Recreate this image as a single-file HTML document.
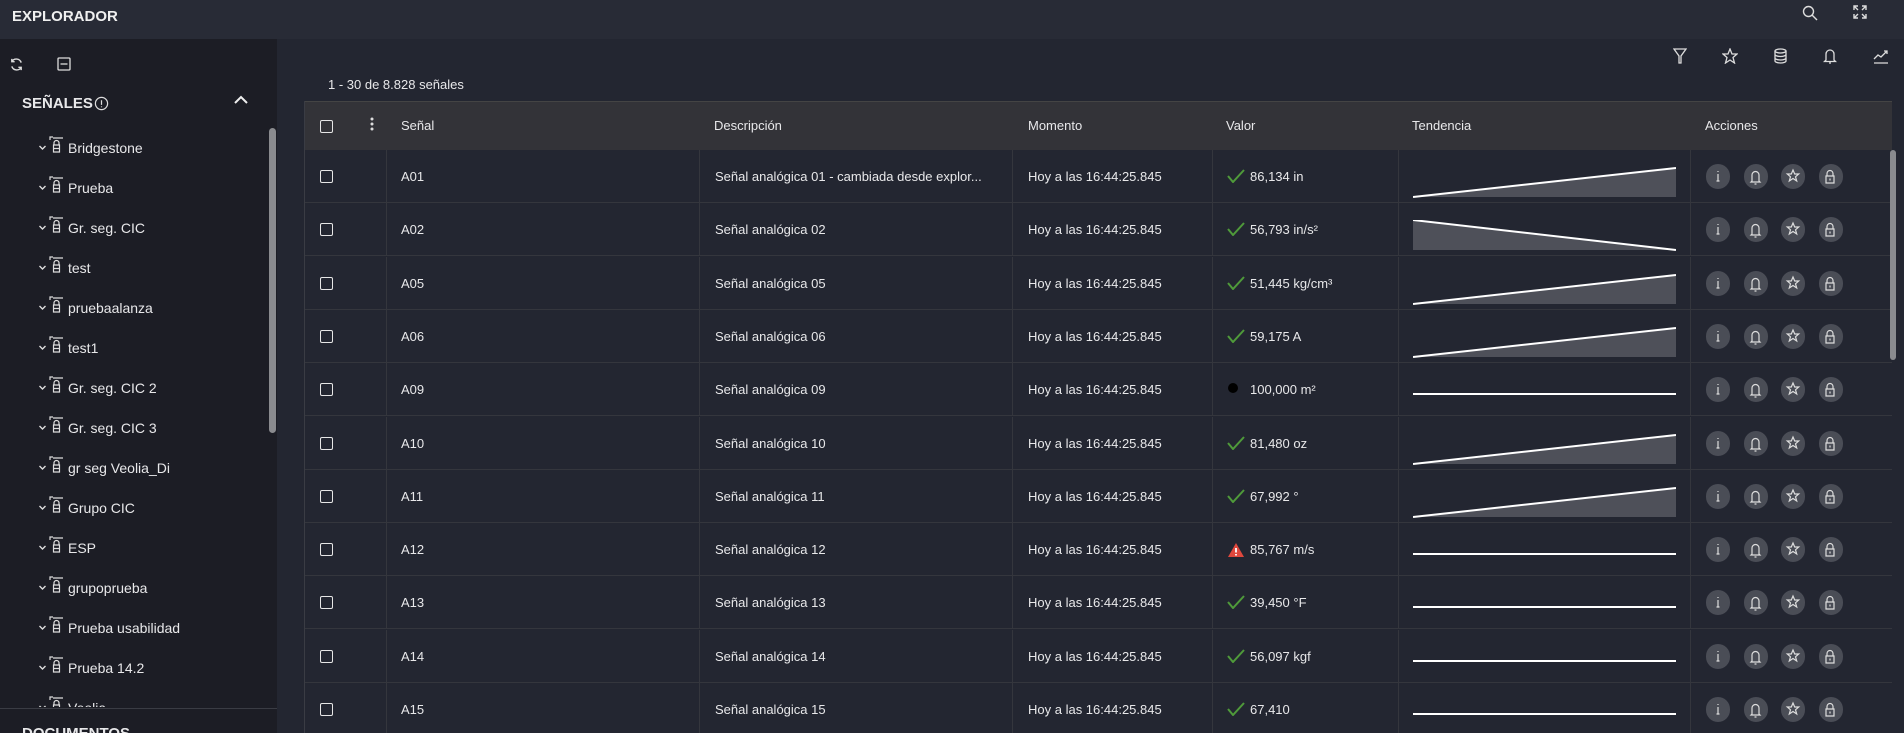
<!DOCTYPE html>
<html style="width:1904px;height:733px;overflow:hidden"><head><meta charset="utf-8"><style>
*{margin:0;padding:0;box-sizing:border-box}
body{width:1904px;height:733px;overflow:hidden;background:#232631;font-family:"Liberation Sans",sans-serif;color:#e8e8ea;font-size:13px;position:relative}
#wrap{position:absolute;left:0;top:0;width:1904px;height:733px;overflow:hidden}
.a{position:absolute}
#hdr{left:0;top:0;width:1904px;height:39px;background:#282b36}
#side{left:0;top:39px;width:277px;height:694px;background:#1c1d25}
.ti{position:absolute;left:38px;font-size:14px;height:20px;line-height:20px}
.ti .ch{position:absolute;left:0;top:5px}
.ti .ic{position:absolute;left:11px;top:-2px}
.ti span{position:absolute;left:30px;white-space:nowrap}
.row{position:absolute;left:304px;width:1588px;height:53px;border-bottom:1px solid #34363d}
.row div{position:absolute;top:0;height:53px;line-height:53px;white-space:nowrap}
.cb{width:13px;height:13px;border:1.5px solid #e6e6e6;border-radius:2px;position:absolute}
.vl{position:absolute;top:0;width:1px;height:100%;background:#34363d}
.act{position:absolute;top:14px;width:24px;height:25px;border-radius:12px;background:#4a4d56}
</style></head><body><div id="wrap">
<div id="hdr" class="a"><div class="a" style="left:12px;top:8px;font-size:15px;font-weight:bold;color:#f0f0f0">EXPLORADOR</div>
<svg class="a" style="left:1802px;top:5px" width="16" height="16" viewBox="0 0 16 16" fill="none" stroke="#ddd" stroke-width="1.4"><circle cx="6.5" cy="6.5" r="5"/><path d="M10 10l5 5"/></svg>
<svg class="a" style="left:1853px;top:5px" width="14" height="14" viewBox="0 0 14 14" fill="none" stroke="#ddd" stroke-width="1.4"><path d="M1 5V1h4M9 1h4v4M13 9v4H9M5 13H1V9M1 1l4 4M13 1L9 5M13 13L9 9M1 13l4-4"/></svg>
</div>
<div id="side" class="a">
<svg class="a" style="left:9px;top:18px" width="15" height="15" viewBox="0 0 16 16" fill="none" stroke="#ddd" stroke-width="1.5"><path d="M13 6A5.5 5.5 0 0 0 3 5M3 10a5.5 5.5 0 0 0 10 1M3 2v3h3M13 14v-3h-3"/></svg>
<svg class="a" style="left:57px;top:18px" width="14" height="14" viewBox="0 0 14 14" fill="none" stroke="#ddd" stroke-width="1.3"><rect x="1" y="1" width="12" height="12" rx="1"/><path d="M3.5 7h7"/></svg>
<div class="a" style="left:22px;top:56px;font-size:15px;font-weight:bold">SEÑALES</div>
<svg class="a" style="left:94px;top:57px" width="15" height="15" viewBox="0 0 16 16" fill="none" stroke="#ddd" stroke-width="1.3"><circle cx="8" cy="8" r="6.5"/><path d="M8 4.5v5M8 11v1"/></svg>
<svg class="a" style="left:234px;top:56px" width="14" height="10" viewBox="0 0 14 10" fill="none" stroke="#eee" stroke-width="2"><path d="M1 8l6-6 6 6"/></svg>
<div class="a" style="left:269px;top:89px;width:7px;height:305px;border-radius:4px;background:#8a8b8f"></div>
<div class="a" style="left:0;top:669px;width:277px;height:1px;background:#3a3c44"></div>
<div class="a" style="left:22px;top:686px;font-size:15px;font-weight:bold">DOCUMENTOS</div>
</div>
<div id="tree"></div>
<div class="a" style="left:328px;top:77px;font-size:13px">1 - 30 de 8.828 señales</div>
<svg class="a" style="left:1673px;top:48px" width="14" height="16" viewBox="0 0 14 16" fill="none" stroke="#ddd" stroke-width="1.3"><path d="M1 1h12L8 8v7H6V8z"/></svg>
<svg class="a" style="left:1722px;top:48px" width="16" height="16" viewBox="0 0 16 16" fill="none" stroke="#ddd" stroke-width="1.3"><path d="M8 1l2 5h5l-4 3.5 1.5 5.5L8 12l-4.5 3L5 9.5 1 6h5z"/></svg>
<svg class="a" style="left:1774px;top:48px" width="13" height="16" viewBox="0 0 13 16" fill="none" stroke="#ddd" stroke-width="1.3"><ellipse cx="6.5" cy="3" rx="5.5" ry="2"/><path d="M1 3v10c0 1 2.5 2 5.5 2s5.5-1 5.5-2V3M1 6.5c0 1 2.5 2 5.5 2s5.5-1 5.5-2M1 10c0 1 2.5 2 5.5 2s5.5-1 5.5-2"/></svg>
<svg class="a" style="left:1823px;top:48px" width="14" height="16" viewBox="0 0 14 16" fill="none" stroke="#ddd" stroke-width="1.3"><path d="M3 12V6a4 4 0 0 1 8 0v6l1.5 1.5h-11zM6 15h2"/></svg>
<svg class="a" style="left:1873px;top:48px" width="16" height="16" viewBox="0 0 16 16" fill="none" stroke="#ddd" stroke-width="1.3"><path d="M1 11l4-4 3 2 6-6M1 15h14M11 3h3v3"/></svg>
<div class="a" style="left:304px;top:101px;width:1588px;height:49px;background:#333338;border-top:1px solid #444"></div>
<div class="cb" style="left:320px;top:120px"></div>
<svg class="a" style="left:370px;top:117px" width="4" height="14"><circle cx="2" cy="2" r="1.5" fill="#ddd"/><circle cx="2" cy="7" r="1.5" fill="#ddd"/><circle cx="2" cy="12" r="1.5" fill="#ddd"/></svg>
<div class="a" style="left:401px;top:118px">Señal</div>
<div class="a" style="left:714px;top:118px">Descripción</div>
<div class="a" style="left:1028px;top:118px">Momento</div>
<div class="a" style="left:1226px;top:118px">Valor</div>
<div class="a" style="left:1412px;top:118px">Tendencia</div>
<div class="a" style="left:1705px;top:118px">Acciones</div>
<div id="rows" style="position:absolute;left:0;top:0;width:1904px;height:733px;overflow:hidden"></div>
<div class="a" style="left:304px;top:101px;width:1px;height:632px;background:#3a3c44"></div>
<div class="a" style="left:1890px;top:150px;width:6px;height:210px;border-radius:3px;background:#8a8b8f"></div>
</div>
<script>
var names=["Bridgestone","Prueba","Gr. seg. CIC","test","pruebaalanza","test1","Gr. seg. CIC 2","Gr. seg. CIC 3","gr seg Veolia_Di","Grupo CIC","ESP","grupoprueba","Prueba usabilidad","Prueba 14.2","Veolia"];
var t="";
names.forEach(function(n,i){var y=138+i*40;t+='<div class="ti" style="top:'+y+'px"><svg class="ch" width="9" height="9" viewBox="0 0 9 9" fill="none" stroke="#ddd" stroke-width="1.4"><path d="M1.5 3l3 3 3-3"/></svg><svg class="ic" width="16" height="18" viewBox="0 0 16 18" fill="none" stroke="#ddd" stroke-width="1.2"><path d="M1 4V1h3M4 2h10M5 9V7a2.5 2.5 0 0 1 5 0v2M4.5 9h6v7h-6zM4.5 12.5h6"/></svg><span>'+n+'</span></div>';});
var tr=document.getElementById("tree");tr.innerHTML=t;tr.style.cssText="position:absolute;left:0;top:0;width:277px;height:707px;overflow:hidden";
var R=[["A01","Señal analógica 01 - cambiada desde explor...","c","86,134 in","u"],["A02","Señal analógica 02","c","56,793 in/s²","d"],["A05","Señal analógica 05","c","51,445 kg/cm³","u"],["A06","Señal analógica 06","c","59,175 A","u"],["A09","Señal analógica 09","o","100,000 m²","f"],["A10","Señal analógica 10","c","81,480 oz","u"],["A11","Señal analógica 11","c","67,992 °","u"],["A12","Señal analógica 12","w","85,767 m/s","f"],["A13","Señal analógica 13","c","39,450 °F","f"],["A14","Señal analógica 14","c","56,097 kgf","f"],["A15","Señal analógica 15","c","67,410","f"]];
var h="";
R.forEach(function(r,i){var y=150+i*53.3;
var ic=r[2]=="c"?'<svg width="18" height="14" viewBox="0 0 18 14" fill="none" stroke="#4f9a3a" stroke-width="2"><path d="M1 7l5 6L17 1"/></svg>':r[2]=="o"?'<svg width="12" height="12"><circle cx="6" cy="6" r="5" fill="#000"/></svg>':'<svg width="18" height="16" viewBox="0 0 18 16"><path d="M9 1L17 15H1z" fill="#e0483d"/><path d="M9 6v4.5M9 12v1.5" stroke="#fff" stroke-width="1.8"/></svg>';
var sp=r[4]=="u"?'<path d="M0 30L263 1V30z" fill="#4e5059"/><path d="M0 30L263 1" stroke="#fff" stroke-width="2"/>':r[4]=="d"?'<path d="M0 0L263 30H0z" fill="#4e5059"/><path d="M0 0L263 30" stroke="#fff" stroke-width="2"/>':'<path d="M0 14H263" stroke="#fff" stroke-width="2"/>';
var ac="";[0,1,2,3].forEach(function(k){ac+='<span class="act" style="left:'+(1402+k*37.5)+'px"></span>';});
h+='<div class="row" style="top:'+y+'px"><span class="cb" style="left:16px;top:20px"></span><span class="vl" style="left:82px"></span><span class="vl" style="left:395px"></span><span class="vl" style="left:708px"></span><span class="vl" style="left:908px"></span><span class="vl" style="left:1094px"></span><span class="vl" style="left:1386px"></span>'+
'<div style="left:97px">'+r[0]+'</div><div style="left:411px">'+r[1]+'</div><div style="left:724px">Hoy a las 16:44:25.845</div>'+
'<div style="left:923px;top:0;line-height:normal;top:19px">'+ic+'</div><div style="left:946px">'+r[3]+'</div>'+
'<svg style="position:absolute;left:1109px;top:17px" width="263" height="32">'+sp+'</svg>'+ac+
'<svg style="position:absolute;left:1402px;top:14px" width="150" height="25" fill="none" stroke="#ddd" stroke-width="1.2"><path d="M12 7v1M12 10v7M10.5 17h3"/><path d="M46 17v-6a3.5 3.5 0 0 1 7 0v6l1 1h-9zM48.5 20h2"/><path d="M87 6l1.7 4h4l-3.2 2.8 1.2 4.2-3.7-2.5-3.7 2.5 1.2-4.2-3.2-2.8h4z"/><path d="M121 12v-2.5a3 3 0 0 1 6 0V12M120 12h8v7h-8zM124 14.5v2"/></svg></div>';});
document.getElementById("rows").innerHTML=h;
</script>
</body></html>
